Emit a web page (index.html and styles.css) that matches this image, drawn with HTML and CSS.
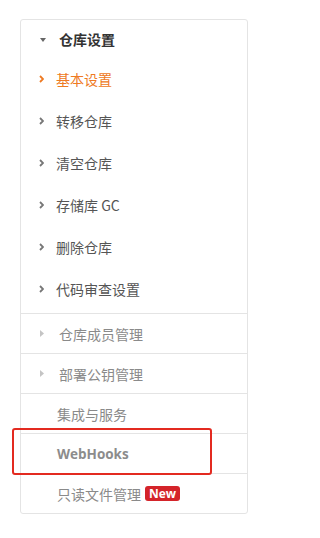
FILE: index.html
```html
<!DOCTYPE html>
<html lang="zh-CN">
<head>
<meta charset="utf-8">
<link rel="stylesheet" href="styles.css">
</head>
<body>
<div class="page">
  <nav class="card">
    <div class="group">
      <div class="group-head">
        <svg class="caret-down" width="6" height="4" viewBox="0 0 6 4"><path d="M0 0H6L3 4Z" fill="#666"/></svg>
        <span>仓库设置</span>
      </div>
      <ul class="items">
        <li class="item active"><svg class="chev" width="5" height="8" viewBox="0 0 5 8"><path d="M1 1L4 4L1 7" fill="none" stroke="currentColor" stroke-width="1.8"/></svg><span>基本设置</span></li>
        <li class="item"><svg class="chev" width="5" height="8" viewBox="0 0 5 8"><path d="M1 1L4 4L1 7" fill="none" stroke="currentColor" stroke-width="1.8"/></svg><span>转移仓库</span></li>
        <li class="item"><svg class="chev" width="5" height="8" viewBox="0 0 5 8"><path d="M1 1L4 4L1 7" fill="none" stroke="currentColor" stroke-width="1.8"/></svg><span>清空仓库</span></li>
        <li class="item"><svg class="chev" width="5" height="8" viewBox="0 0 5 8"><path d="M1 1L4 4L1 7" fill="none" stroke="currentColor" stroke-width="1.8"/></svg><span>存储库 GC</span></li>
        <li class="item"><svg class="chev" width="5" height="8" viewBox="0 0 5 8"><path d="M1 1L4 4L1 7" fill="none" stroke="currentColor" stroke-width="1.8"/></svg><span>删除仓库</span></li>
        <li class="item"><svg class="chev" width="5" height="8" viewBox="0 0 5 8"><path d="M1 1L4 4L1 7" fill="none" stroke="currentColor" stroke-width="1.8"/></svg><span>代码审查设置</span></li>
      </ul>
    </div>
    <div class="row row-caret"><svg class="caret-right" width="4" height="7" viewBox="0 0 4 7"><path d="M0 0L4 3.5L0 7Z" fill="#c4c4c4"/></svg><span>仓库成员管理</span></div>
    <div class="row row-caret"><svg class="caret-right" width="4" height="7" viewBox="0 0 4 7"><path d="M0 0L4 3.5L0 7Z" fill="#c4c4c4"/></svg><span>部署公钥管理</span></div>
    <div class="row">集成与服务</div>
    <div class="row highlight-wrap"><span class="bold">WebHooks</span><div class="highlight"></div></div>
    <div class="row">只读文件管理<span class="badge">New</span></div>
  </nav>
</div>
</body>
</html>
```
FILE: styles.css
```css
html, body {
  margin: 0;
  padding: 0;
  background: #fff;
}
body {
  font-family: "Noto Sans CJK SC", "Noto Sans", sans-serif;
  font-size: 14px;
  color: #555;
}
.page {
  padding: 19px 0 0 20px;
}
.card {
  width: 226px;
  border: 1px solid #e4e4e4;
  border-radius: 3px;
  background: #fff;
}
.group {
  padding-bottom: 3px;
}
.group-head {
  height: 38px;
  display: flex;
  align-items: center;
  font-weight: bold;
  color: #333;
  padding-left: 19px;
}
.caret-down {
  margin-right: 13px;
  margin-top: 1px;
}
.items {
  list-style: none;
  margin: 0;
  padding: 0;
}
.item {
  height: 42px;
  display: flex;
  align-items: center;
  padding-left: 18px;
  color: #555;
}
.item .chev {
  color: #777;
  margin-right: 12px;
}
.item.active {
  color: #ee7a23;
}
.item.active .chev {
  color: #ee7a23;
}
.row {
  height: 39px;
  border-top: 1px solid #e4e4e4;
  display: flex;
  align-items: center;
  padding-left: 36px;
  color: #8a8a8a;
}
.row-caret {
  padding-left: 19px;
}
.caret-right {
  margin-right: 15px;
}
.bold {
  font-weight: bold;
  font-family: "Open Sans", "Noto Sans", sans-serif;
  font-size: 13.5px;
  color: #8c8c8c;
}
.highlight-wrap {
  position: relative;
}
.highlight {
  position: absolute;
  left: -9px;
  top: -6px;
  width: 196px;
  height: 43px;
  border: 2.5px solid #e32a20;
  border-radius: 3px;
}
.badge {
  margin-left: 4px;
  background: #d4242a;
  color: #fff;
  font-family: "Open Sans", "Liberation Sans", sans-serif;
  font-weight: bold;
  font-size: 12px;
  line-height: 15px;
  height: 15px;
  padding: 0 4px;
  border-radius: 3px;
}
```
